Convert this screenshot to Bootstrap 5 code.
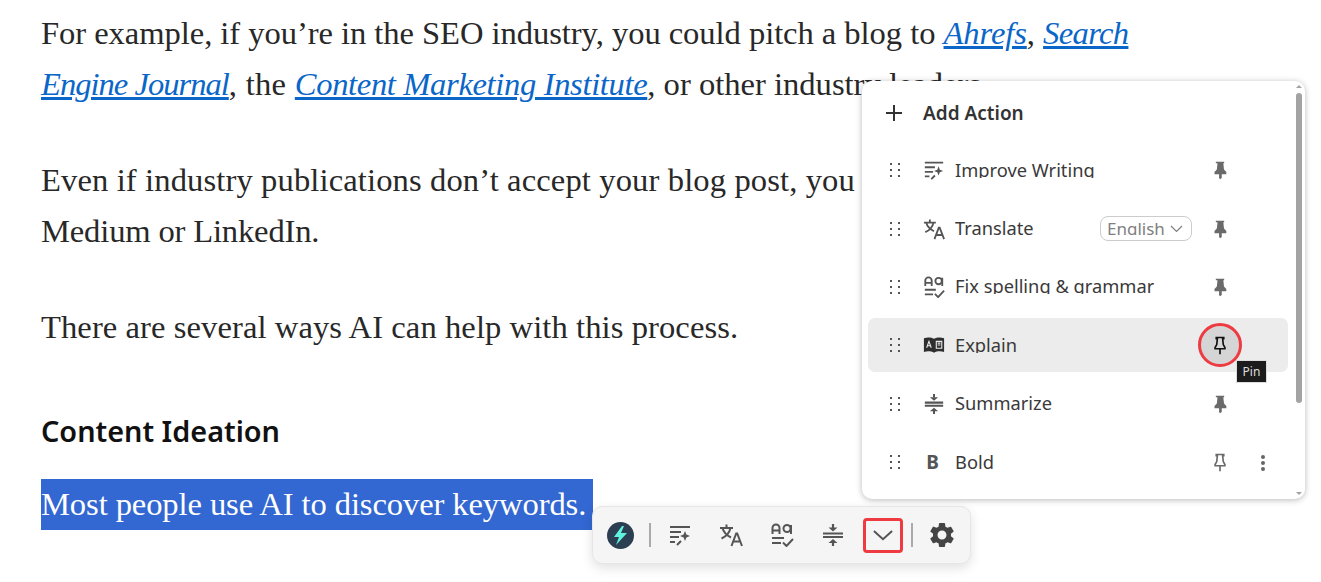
<!doctype html>
<html lang="en"><head><meta charset="utf-8"><title>AI toolbar</title>
<link href="https://cdn.jsdelivr.net/npm/bootstrap@5.3.0/dist/css/bootstrap.min.css" rel="stylesheet">
<style>
html,body{height:582px;overflow:hidden;background:#fff}
.article{padding:8px 0 0 41px;font-family:"Liberation Serif",serif;font-size:32.6px;line-height:51px;color:#282828;white-space:nowrap}
.article p{margin:0 0 45px}
.article a{color:#0a66c8;font-style:italic;text-decoration:underline}
.tight-a{letter-spacing:-.055px}
.wide-a{letter-spacing:.08px}
.wide-b{letter-spacing:.12px}
.tight-b{letter-spacing:-.16px}
.sp-a{letter-spacing:-.1px}
.sp-s{letter-spacing:-.65px}
.sp-e{letter-spacing:-1px}
.sp-t{letter-spacing:.3px}
.sp-c{letter-spacing:-.35px}
.article h2{font:600 28.8px/36px "Noto Sans",sans-serif;color:#111;margin:60px 0 30px}
.picked{background:#3367d1;color:#fff;display:inline-block;padding-right:7px;letter-spacing:-.1px}
.panel{position:absolute;left:862px;top:81px;width:443px;height:418px;background:#fff;border-radius:10px;box-shadow:0 1px 6px rgba(0,0,0,.28);font-family:"Noto Sans",sans-serif;color:#3a3a3a;overflow:hidden}
.track{position:absolute;top:0;right:0;width:11px;height:100%}
.thumb{position:absolute;left:2px;top:12px;width:6px;height:310px;background:#a3a3a3;border-radius:3px}
.arr{position:absolute;left:2px;width:0;height:0;border-left:3px solid transparent;border-right:3px solid transparent}
.arr-up{top:4px;border-bottom:3px solid #a3a3a3}.arr-down{bottom:4px;border-top:3px solid #a3a3a3}
.add-row{height:32px;margin:16px 0 14.2px 24px;gap:21px;font-size:19px;font-weight:600;color:#333}
.action-list{gap:4.4px;padding:0 17px 0 6px}
.action{position:relative;height:54px;border-radius:7px;padding:0 0 0 22px}
.action.on{background:#ececec}
.grip{width:10px;height:14px;display:grid;grid-template-columns:2px 2px;column-gap:6px;row-gap:4px;margin-right:23px;flex:none}
.grip i{width:2px;height:2px;background:#555}
.ic{width:22px;height:22px;flex:none;margin-right:10px;color:#555}
.ic.dark{color:#2e2e2e}
.bee{font-weight:700;font-size:19px;text-align:center;line-height:22px;color:#555;padding-right:3px}
.name{font-size:18.3px;line-height:21px;height:19px;margin-bottom:4px;overflow:hidden;flex:none;white-space:nowrap}
.lang{height:25px;width:92px;margin-left:auto;margin-right:96px;border:1px solid #ccc;border-radius:8px;color:#808080;font-size:17px;gap:5px;padding-left:6px;flex:none}
.lang-text{line-height:21px;height:17px;margin-bottom:5px;overflow:hidden}
.pin-slot{position:absolute;top:7px;left:332px;width:40px;height:40px;color:#6a6a6a}
.pin-slot svg{width:20px;height:20px}
.kebab{position:absolute;left:393px;top:20px;width:4px;display:grid;gap:2px}
.kebab i{width:4px;height:4px;border-radius:50%;background:#666}
.ring{border:3.5px solid #ee3b42;border-radius:50%;background:#d5d5d5;width:44px;height:44px;top:5px;left:330px;color:#111;position:absolute}
.tip{position:absolute;left:1236px;top:360px;width:31px;height:23px;background:#1c1c1c;border:1px solid #ddd;color:#ddd;font:12px/21px "Noto Sans",sans-serif;text-align:center}
.toolbar{position:absolute;left:592px;top:506px;width:379px;height:58px;background:#f5f5f5;border:1px solid #e6e6e6;border-radius:10px;box-shadow:0 4px 12px rgba(0,0,0,.12);color:#555;padding-left:14px}
.spark{width:27px;height:27px;border-radius:50%;background:#2b3e52;flex:none;margin-right:15px}
.vr-line{width:2px;height:24px;background:#aaa;flex:none}
.tool{width:24px;height:24px;flex:none;margin-left:27px}
.tool.lead{margin-left:16.5px}
.chev{width:40px;height:35px;border:3px solid #ee3b42;border-radius:4px;flex:none;margin:1px 8px 0 18px}
.gear{width:30px;height:30px;flex:none;color:#444;margin-left:14px}
</style></head>
<body class="position-relative">
<svg width="0" height="0" class="position-absolute">
<defs>
<symbol id="i-write" viewBox="0 0 24 24"><path d="M2 4h20M2 9h11M2 14h9M2 19h5M9 22l4-4" fill="none" stroke="currentColor" stroke-width="2"/><path d="M17 8l1.400 3.600L22 13l-3.600 1.400L17 18l-1.400-3.600L12 13l3.600-1.400z" fill="currentColor"/></symbol>
<symbol id="i-trans" viewBox="0 0 24 24"><path d="M1 5h13M7.500 1.500V5M3.500 5c1 4 4.500 7.500 8.500 9.500M11.500 5c-1 4.500-4.500 8.500-9 10.500M12.500 23l4.700-12.500h1L23 23M14.500 18.500h7" fill="none" stroke="currentColor" stroke-width="2"/></symbol>
<symbol id="i-spell" viewBox="0 0 24 24"><path d="M2.500 11V5a3.500 3.500 0 0 1 7 0v6M2.500 7.500h7M2 15h12M2 20h9M13 19.500l3.500 3.500 6.500-7" fill="none" stroke="currentColor" stroke-width="2"/><circle cx="17" cy="5.500" r="3.500" fill="none" stroke="currentColor" stroke-width="2"/><path d="M21 2v9" stroke="currentColor" stroke-width="2"/></symbol>
<symbol id="i-book" viewBox="0 0 24 24"><path d="M1 4.500c4-1.300 8-1 11 .8 3-1.800 7-2.100 11-.8v15c-4-1-8-.8-11 1-3-1.800-7-2-11-1z" fill="currentColor"/><path d="M4 15l2.500-7 2.500 7M5 12.800h3M14.500 8h6v7.500h-6zM16 10h3M16 12h3" fill="none" stroke="#ececec" stroke-width="1.200"/></symbol>
<symbol id="i-sum" viewBox="0 0 24 24"><path d="M2 10.500h20M2 14h20M12 1v4M12 23v-4" fill="none" stroke="currentColor" stroke-width="2.200"/><path d="M7.500 4.500l4.500 4 4.500-4zM7.500 20l4.500-4 4.500 4z" fill="currentColor"/></symbol>
<symbol id="i-pin" viewBox="0 0 24 24"><path d="M7 2h10v2h-1l.8 7.500 2.800 3V17h-5.500v4.500L12 23l-1.100-1.500V17H5.400v-2.500l2.800-3L9 4H7z" fill="currentColor"/></symbol>
<symbol id="i-pino" viewBox="0 0 24 24"><path d="M7.500 3h9v1.500h-1.300l.7 7 2 3.500v1.500H6.100V15l2-3.500.7-7H7.500zM12 16.500V23" fill="none" stroke="currentColor" stroke-width="2"/></symbol>
<symbol id="i-gear" viewBox="0 0 24 24"><path fill="currentColor" d="M19.140 12.940c.04-.3.060-.61.060-.94 0-.32-.02-.64-.07-.94l2.030-1.580c.18-.14.230-.41.120-.61l-1.920-3.320c-.12-.22-.37-.29-.59-.22l-2.390.960c-.5-.38-1.030-.7-1.620-.94l-.36-2.540c-.04-.24-.24-.41-.48-.41h-3.840c-.24 0-.43.170-.47.410l-.36 2.540c-.59.240-1.130.570-1.620.940l-2.390-.96c-.22-.08-.47 0-.59.220L2.740 8.870c-.12.210-.08.470.120.610l2.030 1.580c-.05.3-.09.630-.09.940s.020.640.070.940l-2.030 1.580c-.18.140-.23.410-.12.610l1.920 3.320c.12.220.37.290.59.220l2.390-.96c.5.380 1.030.7 1.620.94l.36 2.540c.05.240.24.410.48.410h3.840c.24 0 .44-.17.47-.41l.36-2.540c.59-.24 1.130-.56 1.620-.94l2.390.96c.22.080.47 0 .59-.22l1.920-3.320c.12-.22.070-.47-.12-.61l-2.010-1.580zM12 15.600c-1.980 0-3.600-1.620-3.600-3.600s1.620-3.600 3.600-3.600 3.600 1.620 3.600 3.600-1.620 3.600-3.600 3.600z"/></symbol>
</defs></svg>

<main class="article">
<p><span class="tight-a">For example, if you’re in the SEO industry, you could pitch a blog to</span> <a href="#"><span class="sp-a">Ahrefs</span></a>, <a href="#"><span class="sp-s">Search</span><br><span class="sp-e">Engine Journal</span></a><span class="sp-t">, the </span><a href="#"><span class="sp-c">Content Marketing Institute</span></a>, or other industry leaders.</p>
<p><span class="wide-b">Even if industry publications don’t accept your blog post, you could still publish it on</span><br><span class="tight-b">Medium or LinkedIn.</span></p>
<p class="wide-a">There are several ways AI can help with this process.</p>
<h2>Content Ideation</h2>
<div><span class="picked">Most people use AI to discover keywords.</span></div>
</main>

<section class="panel">
<div class="add-row d-flex align-items-center"><svg width="16" height="16" viewBox="0 0 16 16"><path d="M8 0v16M0 8h16" stroke="#333" stroke-width="2"/></svg><span>Add Action</span></div>
<div class="action-list d-flex flex-column">
<div class="action d-flex align-items-center"><span class="grip"><i></i><i></i><i></i><i></i><i></i><i></i></span><svg class="ic"><use href="#i-write"/></svg><span class="name">Improve Writing</span><span class="pin-slot d-flex align-items-center justify-content-center"><svg><use href="#i-pin"/></svg></span></div>
<div class="action d-flex align-items-center"><span class="grip"><i></i><i></i><i></i><i></i><i></i><i></i></span><svg class="ic"><use href="#i-trans"/></svg><span class="name">Translate</span><span class="lang d-flex align-items-center"><span class="lang-text">English</span><svg width="13" height="8" viewBox="0 0 13 8"><path d="M1 1l5.500 5.500L12 1" fill="none" stroke="#808080" stroke-width="1.200"/></svg></span><span class="pin-slot d-flex align-items-center justify-content-center"><svg><use href="#i-pin"/></svg></span></div>
<div class="action d-flex align-items-center"><span class="grip"><i></i><i></i><i></i><i></i><i></i><i></i></span><svg class="ic"><use href="#i-spell"/></svg><span class="name">Fix spelling &amp; grammar</span><span class="pin-slot d-flex align-items-center justify-content-center"><svg><use href="#i-pin"/></svg></span></div>
<div class="action on d-flex align-items-center"><span class="grip"><i></i><i></i><i></i><i></i><i></i><i></i></span><svg class="ic dark"><use href="#i-book"/></svg><span class="name">Explain</span><span class="ring d-flex align-items-center justify-content-center"><svg width="20" height="20"><use href="#i-pino"/></svg></span></div>
<div class="action d-flex align-items-center"><span class="grip"><i></i><i></i><i></i><i></i><i></i><i></i></span><svg class="ic"><use href="#i-sum"/></svg><span class="name">Summarize</span><span class="pin-slot d-flex align-items-center justify-content-center"><svg><use href="#i-pin"/></svg></span></div>
<div class="action d-flex align-items-center"><span class="grip"><i></i><i></i><i></i><i></i><i></i><i></i></span><span class="ic bee">B</span><span class="name">Bold</span><span class="pin-slot d-flex align-items-center justify-content-center"><svg><use href="#i-pino"/></svg></span><span class="kebab"><i></i><i></i><i></i></span></div>
</div>
<div class="track"><span class="arr arr-up"></span><span class="thumb"></span><span class="arr arr-down"></span></div>
</section>
<div class="tip">Pin</div>

<div class="toolbar d-flex align-items-center">
<span class="spark d-flex align-items-center justify-content-center"><svg width="17" height="19" viewBox="0 0 17 19"><path d="M10 0L2 11h5l-3 8 11-12H9l3-7z" fill="#5ef2df"/></svg></span>
<span class="vr-line"></span>
<svg class="tool lead"><use href="#i-write"/></svg>
<svg class="tool"><use href="#i-trans"/></svg>
<svg class="tool"><use href="#i-spell"/></svg>
<svg class="tool"><use href="#i-sum"/></svg>
<span class="chev d-flex align-items-center justify-content-center"><svg width="20" height="11" viewBox="0 0 22 12"><path d="M1 1l10 9 10-9" fill="none" stroke="#555" stroke-width="2.200"/></svg></span>
<span class="vr-line"></span>
<svg class="gear"><use href="#i-gear"/></svg>
</div>
</body></html>
